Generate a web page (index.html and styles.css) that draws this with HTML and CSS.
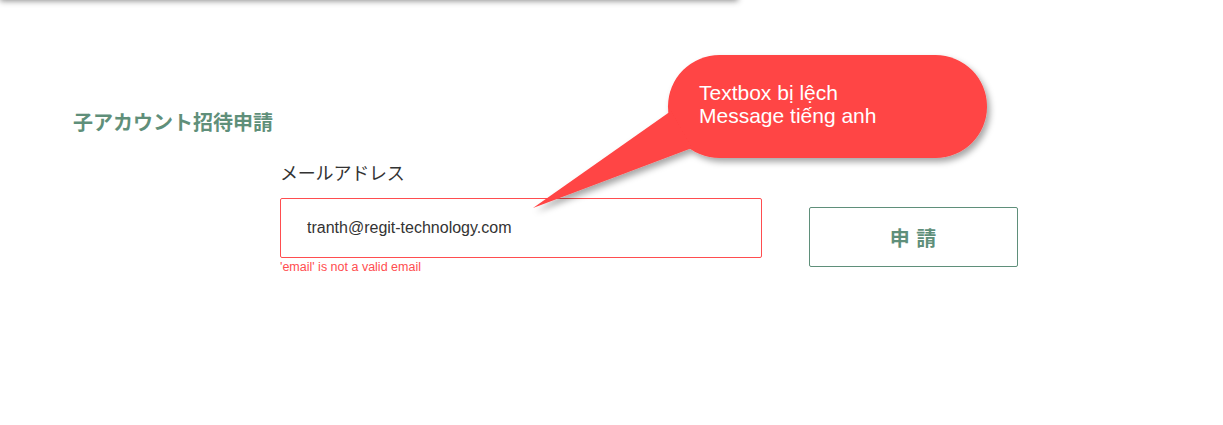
FILE: index.html
```html
<!DOCTYPE html>
<html lang="ja">
<head>
<meta charset="utf-8">
<link rel="stylesheet" href="styles.css">
</head>
<body>
<div class="topbar"></div>
<main class="page">
  <h1 class="title">子アカウント招待申請</h1>
  <form class="form">
    <label class="label" for="email">メールアドレス</label>
    <div class="row">
      <div class="field">
        <input id="email" class="input" type="text" value="tranth@regit-technology.com">
        <div class="error">'email' is not a valid email</div>
      </div>
      <button type="button" class="submit">申 請</button>
    </div>
  </form>
</main>
<div class="callout">
  <svg class="callout-shape" width="500" height="190" viewBox="0 0 500 190">
    <defs>
      <filter id="sh" x="-10%" y="-10%" width="130%" height="140%">
        <feDropShadow dx="3" dy="4" stdDeviation="3" flood-color="#000" flood-opacity="0.35"/>
      </filter>
    </defs>
    <g filter="url(#sh)" fill="#ff4444">
      <rect x="148" y="10" width="319" height="103" rx="51.5" ry="51.5"/>
      <path d="M151 66 L13 163 L172 103 Z"/>
    </g>
  </svg>
  <div class="callout-text">Textbox bị lệch<br>Message tiếng anh</div>
</div>
</body>
</html>
```
FILE: styles.css
```css
html, body {
  margin: 0;
  padding: 0;
  background: #fff;
}
body {
  font-family: "Liberation Sans", Arial, "Noto Sans CJK JP", sans-serif;
  position: relative;
  min-height: 425px;
  overflow: hidden;
}
.topbar {
  width: 738px;
  height: 40px;
  margin-top: -40px;
  background: #fff;
  box-shadow: 0 1px 6px rgba(0, 0, 0, 0.45);
}
.page {
  padding: 108px 0 0 73px;
}
.title {
  margin: 0;
  font-family: "Noto Sans CJK JP", sans-serif;
  font-size: 20px;
  line-height: 28px;
  font-weight: 700;
  color: #5f8f7a;
}
.form {
  margin: 23px 0 0 207px;
  display: flex;
  flex-direction: column;
}
.label {
  font-family: "Noto Sans CJK JP", sans-serif;
  font-size: 18px;
  line-height: 26px;
  color: #333;
  letter-spacing: -0.2px;
}
.row {
  display: flex;
  align-items: flex-start;
  margin-top: 13px;
}
.field {
  display: flex;
  flex-direction: column;
  width: 482px;
}
.input {
  box-sizing: border-box;
  width: 482px;
  height: 60px;
  border: 1px solid #ff4d4f;
  border-radius: 2px;
  padding: 0 0 0 26px;
  font-family: "Liberation Sans", Arial, sans-serif;
  font-size: 16px;
  color: #333;
  outline: none;
}
.error {
  margin-top: 2px;
  font-size: 12.5px;
  line-height: 15px;
  color: #ff4d4f;
}
.submit {
  box-sizing: border-box;
  width: 209px;
  height: 60px;
  margin: 9px 0 0 47px;
  background: #fff;
  border: 1px solid #5f8f7a;
  border-radius: 2px;
  font-family: "Noto Sans CJK JP", sans-serif;
  font-size: 20px;
  font-weight: 700;
  color: #5f8f7a;
  letter-spacing: 1px;
  cursor: pointer;
}
.callout {
  position: absolute;
  left: 520px;
  top: 45px;
  width: 500px;
  height: 190px;
}
.callout-shape {
  display: block;
}
.callout-text {
  position: absolute;
  left: 179px;
  top: 36px;
  font-family: "Liberation Sans", Arial, sans-serif;
  font-size: 21px;
  line-height: 23px;
  color: #fff;
}
```
